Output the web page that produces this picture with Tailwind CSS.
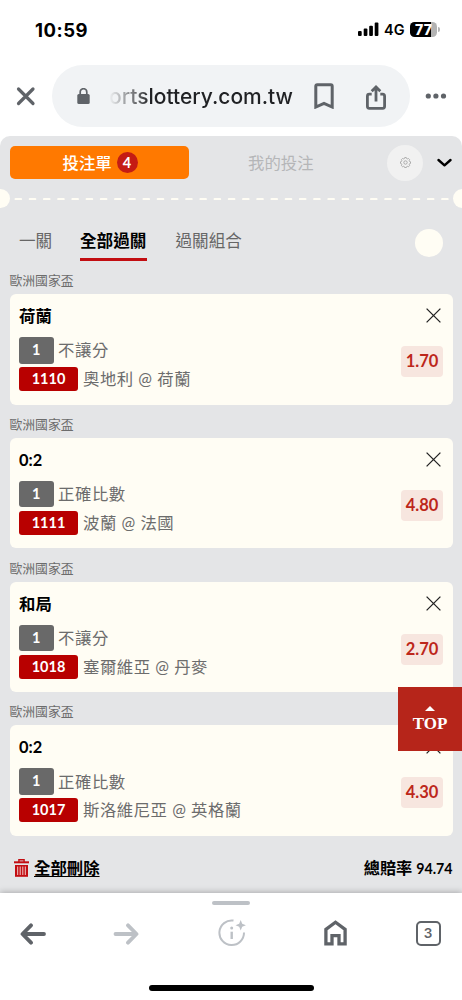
<!DOCTYPE html>
<html lang="zh-Hant">
<head>
<meta charset="utf-8">
<title>投注單</title>
<script src="https://cdn.jsdelivr.net/npm/@tailwindcss/browser@4"></script>
</head>
<body class="bg-white">
<div class="w-[462px] h-[1000px] overflow-hidden flex flex-col bg-white font-['Lato','Noto_Sans_CJK_TC',sans-serif] text-black whitespace-nowrap">
  <div class="h-[65px] shrink-0 flex items-start justify-between pl-[35px] pr-[22px] font-['Inter',sans-serif]">
    <div class="mt-[18px] text-[18.500px] leading-6 font-bold tracking-[0.500px]">10:59</div>
    <div class="mt-[18px] h-6 flex items-center">
      <svg class="w-[21px] h-[14px] mr-[5px] -mt-[2px]" viewBox="0 0 21 14"><rect x="0" y="9" width="3.7" height="5" rx="1"/><rect x="5.7" y="6.5" width="3.7" height="7.5" rx="1"/><rect x="11.2" y="3.8" width="3.7" height="10.2" rx="1"/><rect x="16.7" y="0.5" width="3.7" height="13.5" rx="1"/></svg>
      <span class="text-[14.500px] leading-6 font-semibold w-[26px]">4G</span>
      <div class="w-[27px] h-[15px] -mt-[2px] rounded-[4.500px] bg-[linear-gradient(90deg,#000_78%,#b3b3b3_78%)] text-white text-[14px] leading-[15px] font-extrabold text-center tracking-[0.100px]">77</div>
      <div class="w-[2px] h-[5px] ml-px -mt-[2px] rounded-r-full bg-[#b3b3b3]"></div>
    </div>
  </div>

  <div class="h-[62px] shrink-0 flex items-center">
    <svg class="w-5 h-5 ml-4 mr-4 shrink-0" viewBox="0 0 20 20" fill="none" stroke="#5f6368" stroke-width="3.200" stroke-linecap="round"><path d="M2.500 3 17 17.500M17 3 2.500 17.500"/></svg>
    <div class="w-[358px] h-[62px] rounded-full bg-[#f1f3f5] flex items-center shrink-0">
      <svg class="w-[13px] h-4 ml-[25px] mr-[19px]" viewBox="0 0 13 16"><rect x="0.300" y="6" width="12.400" height="10" rx="1.500" fill="#5f6368"/><path d="M3.200 7V4a3.300 3.300 0 0 1 6.600 0v3" fill="none" stroke="#5f6368" stroke-width="1.700"/></svg>
      <div class="w-[184px] pt-px text-[21px] leading-8 font-medium font-['Inter',sans-serif]"><span class="block bg-[linear-gradient(90deg,#20212400_0,#202124_42px)] bg-clip-text text-transparent">ortslottery.com.tw</span></div>
      <svg class="w-5 h-[26px] ml-[21px]" viewBox="0 0 20 26" fill="none" stroke="#5f6368" stroke-width="3"><path d="M1.800 24V3.200Q1.800 1.800 3.200 1.800H16.800Q18.200 1.800 18.200 3.200V24L10 20.300Z" stroke-linejoin="miter"/></svg>
      <svg class="w-5 h-[25px] ml-[32px] mt-[2px]" viewBox="0 0 20 25" fill="none" stroke="#5f6368" stroke-width="2.800"><path d="M5.700 9.200H3.300Q1.400 9.200 1.400 11.200V21.300Q1.400 23.300 3.300 23.300H16.700Q18.600 23.300 18.600 21.300V11.200Q18.600 9.200 16.700 9.200H14.300M10 16.500V2.500M5.700 6.300 10 2l4.300 4.300"/></svg>
    </div>
    <svg class="w-[22px] h-[6px] ml-[15px] shrink-0" viewBox="0 0 22 6" fill="#5f6368"><circle cx="3.300" cy="3" r="2.600"/><circle cx="10.900" cy="3" r="2.600"/><circle cx="18.500" cy="3" r="2.600"/></svg>
  </div>

  <div class="relative mt-[9px] h-[757px] shrink-0 bg-[#e4e5e7] rounded-t-[10px] flex flex-col">
    <div class="h-[53px] shrink-0 flex items-center pl-[9.500px]">
      <div class="w-[179.500px] h-[33px] rounded-[5px] bg-[#ff7900] flex items-center pl-[53px] text-white">
        <span class="text-[16.400px] font-medium leading-[33px] w-[54px]">投注單</span>
        <span class="w-[21px] h-[21px] rounded-full bg-[#c41c14] text-center text-[14.500px] leading-[21px] font-bold">4</span>
      </div>
      <span class="ml-[59px] w-[139px] text-[16.400px] leading-[33px] text-[#b5b6b8]">我的投注</span>
      <div class="w-9 h-9 rounded-full bg-[#f1f1f1] flex items-center justify-center">
        <svg class="w-[11px] h-[11px]" viewBox="0 0 11 11" fill="none" stroke="#a4a4a4" stroke-width="0.900"><path d="M4.400 1.500 4.700.600h1.600l.300.900 1 .400.900-.400 1.100 1.100-.400.900.400 1 .900.300v1.600l-.900.300-.400 1 .400.900-1.100 1.100-.900-.400-1 .400-.300.900H4.700l-.300-.900-1-.400-.900.400-1.100-1.100.400-.900-.400-1-.900-.300V4.800l.900-.300.400-1-.400-.900L2.500 1.500l.900.400z"/><circle cx="5.500" cy="5.500" r="1.700"/></svg>
      </div>
      <svg class="w-[15px] h-[10px] ml-[13.500px] mt-px" viewBox="0 0 15 10" fill="none" stroke="#000" stroke-width="2.400" stroke-linecap="round" stroke-linejoin="round"><path d="M1.500 2 7.500 7.300 13.500 2"/></svg>
    </div>
    <div class="h-[19px] shrink-0 overflow-hidden flex items-center justify-between">
      <div class="w-[19px] h-[19px] -ml-[9.500px] rounded-full bg-[#fffdf4] shrink-0"></div>
      <svg class="w-[443px] h-[3px] shrink-0" viewBox="0 0 443 3"><path d="M5.600 2H440" stroke="#fffdf4" stroke-width="2.200" stroke-linecap="round" stroke-dasharray="5.400 8.820"/></svg>
      <div class="w-[19px] h-[19px] -mr-[9.500px] rounded-full bg-[#fffdf4] shrink-0"></div>
    </div>
    <div class="h-[62px] shrink-0 flex items-start pt-[17px] pl-[19px] text-[16.600px] leading-[33px] text-[#666]">
      <span class="w-[61px]">一關</span>
      <span class="w-[67px] h-[36px] border-b-[3.500px] border-[#c20d12] font-bold text-black">全部過關</span>
      <span class="ml-[28.500px] w-[239px]">過關組合</span>
      <span class="w-7 h-7 mt-[4px] rounded-full bg-[#fffdf4]"></span>
    </div>

    <div id="list" class="flex flex-col shrink-0"></div>

    <div class="h-[47px] shrink-0 pt-[6.500px] flex justify-between pl-[14px] pr-[9.500px] text-[16.400px] leading-8 font-bold">
      <div class="flex items-center h-8">
        <svg class="w-[15px] h-[18px] mr-[5px]" viewBox="0 0 15 18" fill="none" stroke="#c20d12"><path d="M0 3.300H15" stroke-width="2"/><path d="M4.900 3V.800h5.200V3" stroke-width="1.400"/><path d="M1 6H14V17.800H1Z" fill="#c20d12" stroke="none"/><path d="M3.700 7.500V16M6.200 7.500V16M8.800 7.500V16M11.300 7.500V16" stroke="#f0c9c8" stroke-width="1"/></svg>
        <span class="underline decoration-1 underline-offset-[2px]">全部刪除</span>
      </div>
      <span class="text-[16.200px]">總賠率 <span class="text-[14.200px]">94.74</span></span>
    </div>

    <div class="absolute right-0 top-[551px] w-16 h-16 bg-[#b6251a] text-white flex flex-col items-center pt-[19px]">
      <svg class="w-[10px] h-[5px]" viewBox="0 0 10 5"><path d="M0 5 5 0l5 5z" fill="#fff"/></svg>
      <span class="mt-px font-['Liberation_Serif',serif] font-bold text-[17px] leading-6 -tracking-[0.100px]">TOP</span>
    </div>
  </div>

  <div class="relative h-[107px] shrink-0 bg-white shadow-[0_-1px_6px_rgba(0,0,0,0.25)] flex flex-col items-center">
    <div class="mt-[7.500px] w-[38px] h-[4.500px] rounded-full bg-[#bdc1c6] shrink-0"></div>
    <div class="w-full h-[57px] shrink-0 flex items-center pl-[20px]">
      <svg class="w-[26px] h-[22px]" viewBox="0 0 26 22" fill="none" stroke="#5f6368" stroke-width="3.800" stroke-linecap="round" stroke-linejoin="round"><path d="M24 11H3M11 2.300 2.500 11 11 19.700"/></svg>
      <svg class="w-[26px] h-[22px] ml-[66.500px]" viewBox="0 0 26 22" fill="none" stroke="#bdc1c6" stroke-width="3.800" stroke-linecap="round" stroke-linejoin="round"><path d="M2.500 11H23M15 2.300 23.500 11 15 19.700"/></svg>
      <svg class="w-7 h-7 ml-[79.500px] -mt-px" viewBox="0 0 28 28" fill="none" stroke="#bdc1c6" stroke-width="2"><path d="M15.500 1.600A12.300 12.300 0 1 0 26 13.500"/><path d="M13.700 12.700V20" stroke-width="2.400"/><circle cx="13.700" cy="9" r="1.500" fill="#bdc1c6" stroke="none"/><path d="M22.700 1 24.200 4.700 27.900 6.200 24.200 7.700 22.700 11.400 21.200 7.700 17.500 6.200 21.200 4.700Z" fill="#bdc1c6" stroke="none"/></svg>
      <svg class="w-[23px] h-[26px] ml-[78px] -mt-px" viewBox="0 0 23 26" fill="none" stroke="#5f6368" stroke-width="3.300"><path d="M1.900 23.900V9.300L11.500 2.200 21.100 9.300V23.900H15V15.600H8V23.900Z"/></svg>
      <div class="w-[25px] h-[25px] ml-[68.500px] rounded-[5px] border-[2.500px] border-[#5f6368] flex items-center justify-center font-['Inter',sans-serif] font-semibold text-[13.500px] leading-none text-[#5f6368]">3</div>
    </div>
    <div class="mt-[22.500px] w-[165px] h-[6px] rounded-full bg-black shrink-0"></div>
  </div>
</div>

<template id="bet">
  <section class="h-[143.800px] shrink-0 px-[9.500px]">
    <div class="h-[24px] text-[12.800px] leading-[21px] text-[#6c6c6c]">歐洲國家盃</div>
    <div class="h-[110.700px] rounded-[6px] bg-[#fffdf4] px-[9.500px] flex justify-between">
      <div>
        <div data-f="title" class="h-[43px] text-[16.400px] leading-[43px] font-bold"></div>
        <div class="h-[26.500px] flex items-center">
          <span class="w-[34.500px] h-[26.500px] rounded-[3px] bg-[#696969] text-white text-center text-[14.500px] leading-[26.500px] font-bold">1</span>
          <span data-f="type" class="ml-[4.500px] text-[16.400px] leading-[26px] tracking-[0.550px] text-[#6c6c6c]"></span>
        </div>
        <div class="mt-[3.500px] h-[24px] flex items-center">
          <span data-f="code" class="w-[59px] h-[24px] rounded-[3px] bg-[#b80000] text-white text-center text-[14.500px] leading-[24px] font-bold"></span>
          <span data-f="match" class="ml-[5px] text-[16.400px] leading-[24px] tracking-[0.500px] text-[#6c6c6c]"></span>
        </div>
      </div>
      <div class="flex flex-col items-end">
        <svg class="w-[15px] h-[15px] mt-[14px] mr-[2.500px]" viewBox="0 0 15 15" fill="none" stroke="#222" stroke-width="1.300"><path d="M.600.600 14.400 14.400M14.400.600.600 14.400"/></svg>
        <span data-f="odds" class="mt-[23px] w-[42px] h-[31px] rounded-[4px] bg-[#f7e6df] text-[#bd271b] text-center text-[16.500px] leading-[31px] font-bold"></span>
      </div>
    </div>
  </section>
</template>
<script>
  const bets = [
    { title: '荷蘭', type: '不讓分', code: '1110', match: '奧地利 @ 荷蘭', odds: '1.70' },
    { title: '0:2', type: '正確比數', code: '1111', match: '波蘭 @ 法國', odds: '4.80' },
    { title: '和局', type: '不讓分', code: '1018', match: '塞爾維亞 @ 丹麥', odds: '2.70' },
    { title: '0:2', type: '正確比數', code: '1017', match: '斯洛維尼亞 @ 英格蘭', odds: '4.30' }
  ];
  const list = document.getElementById('list');
  const tpl = document.getElementById('bet');
  bets.forEach(b => {
    const n = tpl.content.cloneNode(true);
    n.querySelectorAll('[data-f]').forEach(e => { e.textContent = b[e.dataset.f]; });
    list.appendChild(n);
  });
</script>
</body>
</html>
